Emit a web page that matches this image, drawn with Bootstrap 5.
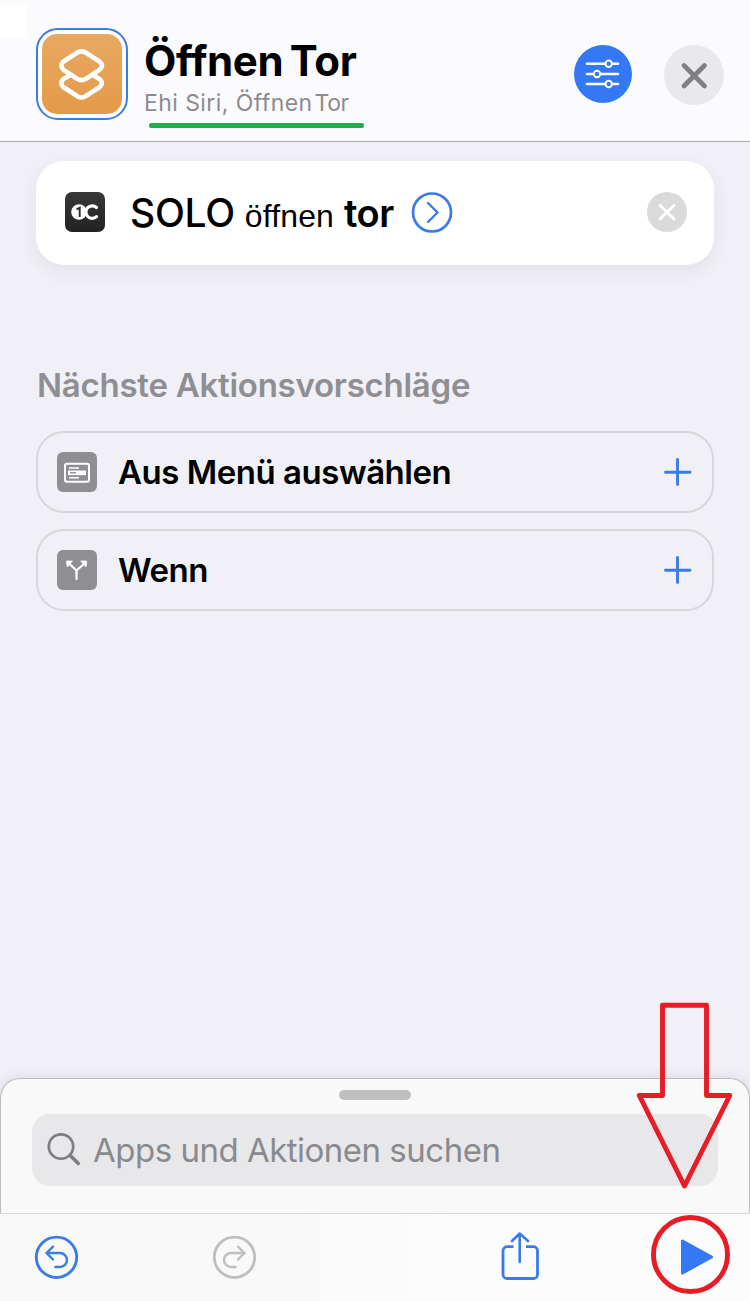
<!DOCTYPE html>
<html lang="de">
<head>
<meta charset="utf-8">
<meta name="viewport" content="width=device-width, initial-scale=1">
<title>Öffnen Tor</title>
<link href="https://cdn.jsdelivr.net/npm/bootstrap@5.3.0/dist/css/bootstrap.min.css" rel="stylesheet">
<style>
body{font-family:Inter,"Liberation Sans",sans-serif;background:#f1f0f6;color:#000}
.screen{width:750px;height:1301px}
svg{display:block;flex:none}
.topbar{height:142px;background:linear-gradient(#fff,#fff) 0 5px/27px 33px no-repeat #fbfbfd;border-bottom:1px solid #a9a9ae;padding:28px 26px 0 36px}
.app-frame{width:92px;height:92px;border:2px solid #3b7be6;border-radius:22px;padding:4px;background:#fff}
.app-tile{width:80px;height:80px;border-radius:15px;background:linear-gradient(#e8a962,#e49a48)}
.titles{margin-left:17px;padding-top:8px}
.ttl{font-size:42px;line-height:50px;font-weight:700;letter-spacing:-.35px;word-spacing:-3px;margin-left:-1px;white-space:nowrap}
.sub{font-size:23px;line-height:28px;color:#8c8c90;letter-spacing:.42px;margin:3px 0 0 -1px;white-space:nowrap}
.sub span+span{letter-spacing:-.4px;margin-left:2px}
.underline-mark{width:215px;height:5px;border-radius:2px;background:#22ad4e;margin:6px 0 0 4px}
.btn-round{border-radius:50%;border:0;padding:0}
.btn-set{width:58px;height:58px;background:#3478f6;margin-top:17px}
.btn-close2{width:60px;height:60px;background:#e9e9eb;margin:17px 0 0 32px}
.step{height:104px;margin:19px 36px 0;border-radius:28px;background:#fff;box-shadow:0 6px 18px rgba(60,50,90,.08);padding:0 27px 2px 29px}
.step-icon{width:40px;height:40px;border-radius:7px;background:linear-gradient(#383838,#222)}
.step-text{margin-left:25px;padding-top:2px}
.w-solo{font-size:39px;font-weight:500;letter-spacing:-.3px}
.w-oeff{font-family:"Liberation Sans",sans-serif;font-size:32px;letter-spacing:.15px;margin-left:10px}
.w-tor{font-size:38px;font-weight:600;letter-spacing:-.5px;margin-left:10px}
.go{margin-left:17px}
.sect{font-size:33px;line-height:40px;font-weight:600;color:#8e8e93;margin:100px 0 10px 37px;letter-spacing:-.25px;white-space:nowrap}
.sugg{height:82px;margin:0 36px;border:2px solid #d6d6db;border-radius:28px;padding:0 20px 0 19px}
.sugg-icon{width:40px;height:40px;border-radius:6px;background:#8e8e93}
.sugg-txt{font-size:33px;font-weight:600;letter-spacing:-.47px;margin:2px 0 0 21px;white-space:nowrap}
.sheet{height:135px;background:#f9f9f9;border:1px solid #bcbcc0;border-bottom:0;border-radius:20px 20px 0 0;box-shadow:0 -2px 12px rgba(60,50,90,.10);padding:11px 31px 0}
.grip{width:72px;height:10px;border-radius:5px;background:#bfbfc1}
.search{height:72px;border-radius:18px;background:#e8e8ea;margin-top:14px;color:#8a8a8e;padding-left:15px}
.search span{font-size:33px;letter-spacing:-.5px;margin:2px 0 0 12px;white-space:nowrap}
.toolbar{height:88px;background:linear-gradient(90deg,#f8f8f8,#f9f9f9 40%,#fcfcfd 60%);border-top:1px solid #d8d8da;padding:17px 34px 0 34px}
.ic-redo{margin-left:134px}
.ic-share{margin-left:242px}
.ic-play{margin:7px 2px 0 auto}
.note{left:630px;top:995px;pointer-events:none}
</style>
</head>
<body>
<div class="screen d-flex flex-column position-relative overflow-hidden">
  <header class="topbar d-flex align-items-start flex-shrink-0">
    <div class="app-frame flex-shrink-0">
      <div class="app-tile">
        <svg width="80" height="80" viewBox="0 0 80 80" fill="none" stroke="#fff" stroke-width="4.600" stroke-linejoin="round" stroke-linecap="round">
          <path d="M35.500 18.500Q39.500 16.200 43.500 18.500L57.500 27.500Q62.500 31.500 57.500 35.800L43.500 45Q39.500 47.300 35.500 45L21.500 35.800Q17 31.500 21.500 27.500Z"/>
          <path d="M27.500 41.500L21.500 45Q17 49 21.500 53.300L35.500 62.300Q39.500 64.700 43.500 62.300L57.500 53.300Q62.500 49 57.500 45L51.500 41.500"/>
        </svg>
      </div>
    </div>
    <div class="titles">
      <div class="ttl">Öffnen Tor</div>
      <div class="sub"><span>Ehi Siri, Öffnen</span><span>Tor</span></div>
      <div class="underline-mark"></div>
    </div>
    <button class="btn btn-round btn-set ms-auto flex-shrink-0" aria-label="Einstellungen">
      <svg width="58" height="58" viewBox="0 0 58 58" fill="#3478f6" stroke="#fff" stroke-width="2.600" stroke-linecap="round"><path d="M13 18.700h31M13 29h31M13 39h31"/><circle cx="34.700" cy="18.700" r="3.200" stroke-width="2"/><circle cx="23" cy="29" r="3.200" stroke-width="2"/><circle cx="34.700" cy="39" r="3.200" stroke-width="2"/></svg>
    </button>
    <button class="btn btn-round btn-close2 flex-shrink-0" aria-label="Schließen">
      <svg width="60" height="60" viewBox="0 0 60 60" stroke="#808084" stroke-width="4.700" stroke-linecap="round"><path d="M20 20.500l20.500 20.500M40.500 20.500l-20.500 20.500"/></svg>
    </button>
  </header>
  <main class="flex-grow-1">
    <section class="step d-flex align-items-center">
      <div class="step-icon flex-shrink-0">
        <svg width="40" height="40" viewBox="0 0 40 40" fill="none"><circle cx="14" cy="20" r="7.800" fill="#fff"/><path d="M11.500 17.300L14.700 15.800V25" stroke="#2b2b2b" stroke-width="1.900"/><path d="M31.500 15.500A6.300 6.300 0 1 0 31.500 24.700" stroke="#fff" stroke-width="3.200" stroke-linecap="round"/></svg>
      </div>
      <div class="step-text d-flex align-items-baseline text-nowrap"><span class="w-solo">SOLO</span><span class="w-oeff">öffnen</span><span class="w-tor">tor</span></div>
      <svg class="go" width="42" height="42" viewBox="0 0 42 42" fill="none" stroke="#3b7be6" stroke-width="2.700" stroke-linecap="round" stroke-linejoin="round"><circle cx="21" cy="21.500" r="19"/><path d="M17 12l9.500 9.500-9.500 9.500" stroke-width="2.400"/></svg>
      <svg class="ms-auto" width="40" height="40" viewBox="0 0 40 40"><circle cx="20" cy="20" r="20" fill="#dadada"/><path d="M13 13.300l14 13.700M27 13.300L13 27" stroke="#fff" stroke-width="2.800" stroke-linecap="round"/></svg>
    </section>
    <h2 class="sect">Nächste Aktionsvorschläge</h2>
    <div class="d-flex flex-column gap-3 pt-3">
      <div class="sugg d-flex align-items-center">
        <div class="sugg-icon flex-shrink-0"><svg width="40" height="40" viewBox="0 0 40 40"><rect x="8" y="11.800" width="24" height="18" rx="2" fill="none" stroke="#fff" stroke-width="2"/><path d="M12 16h10M12 25.700h10" stroke="#fff" stroke-width="1.600"/><path d="M11 18.500h18v4.700H11z" fill="#fff"/><path d="M13 20.800h6" stroke="#8e8e93" stroke-width="1.400"/></svg></div>
        <span class="sugg-txt">Aus Menü auswählen</span>
        <svg class="ms-auto" width="28" height="28" viewBox="0 0 28 28" stroke="#3b7be6" stroke-width="2.900" stroke-linecap="round"><path d="M13.500 1.500v25M1.500 14.300h24.500"/></svg>
      </div>
      <div class="sugg d-flex align-items-center">
        <div class="sugg-icon flex-shrink-0"><svg width="40" height="40" viewBox="0 0 40 40"><path d="M19.500 29v-8.500L12.500 14M19.500 20.500L27 14" fill="none" stroke="#fff" stroke-width="2.300" stroke-linecap="round" stroke-linejoin="round"/><path d="M9.500 11h6l-5.300 6zM29.700 11h-6l5.300 6z" fill="#fff" stroke="#fff" stroke-width=".8" stroke-linejoin="round"/></svg></div>
        <span class="sugg-txt">Wenn</span>
        <svg class="ms-auto" width="28" height="28" viewBox="0 0 28 28" stroke="#3b7be6" stroke-width="2.900" stroke-linecap="round"><path d="M13.500 1.500v25M1.500 14.300h24.500"/></svg>
      </div>
    </div>
  </main>
  <section class="sheet flex-shrink-0">
    <div class="grip mx-auto"></div>
    <div class="search d-flex align-items-center">
      <svg width="34" height="34" viewBox="0 0 34 34" fill="none" stroke="#7e7e82" stroke-linecap="round"><circle cx="14" cy="13.500" r="12.200" stroke-width="2.700"/><path d="M23.300 22.500l8 8" stroke-width="3.600"/></svg>
      <span>Apps und Aktionen suchen</span>
    </div>
  </section>
  <footer class="toolbar d-flex align-items-start flex-shrink-0">
    <svg class="ic-undo" width="45" height="52" viewBox="0 0 45 52" fill="none" stroke="#3b7be6" stroke-width="2.900" stroke-linecap="round" stroke-linejoin="round"><circle cx="22.500" cy="26.300" r="20.200"/><path d="M19 15.700L12.500 22l6.500 6.500M12.500 22H26a7 7 0 0 1 0 14h-4.500" stroke-width="2.400"/></svg>
    <svg class="ic-redo" width="45" height="52" viewBox="0 0 45 52" fill="none" stroke="#bfbfbf" stroke-width="2.900" stroke-linecap="round" stroke-linejoin="round"><circle cx="21.500" cy="26.300" r="20.200"/><path d="M25 15.700L31.500 22l-6.500 6.500M31.500 22H18a7 7 0 0 0 0 14h4.500" stroke-width="2.400"/></svg>
    <svg class="ic-share" width="40" height="52" viewBox="0 0 40 52" fill="none" stroke="#3b7be6" stroke-width="2.800" stroke-linecap="butt" stroke-linejoin="round"><path d="M13.500 15.700H7a4 4 0 0 0-4 4V43.500a4 4 0 0 0 4 4H33.500a4 4 0 0 0 4-4V19.700a4 4 0 0 0-4-4H26"/><path d="M19.700 31V3M12 10L19.700 2.500L28 10" stroke-linecap="round" stroke-width="2.600"/></svg>
    <svg class="ic-play" width="34" height="38" viewBox="0 0 34 38"><path d="M2.500 3V35L31.500 19Z" fill="#3478f6" stroke="#3478f6" stroke-width="3" stroke-linejoin="round"/></svg>
  </footer>
  <svg class="note position-absolute" width="110" height="304" viewBox="0 0 110 304" fill="none" stroke="#e81c24" stroke-width="4.900" stroke-linejoin="round"><path d="M32.500 10.300H76.500V100.500H99.800L54.500 191L9.300 100.500H32.500Z"/><circle cx="60.500" cy="259.500" r="37"/></svg>
</div>
<script src="https://cdn.jsdelivr.net/npm/bootstrap@5.3.0/dist/js/bootstrap.bundle.min.js"></script>
</body>
</html>
